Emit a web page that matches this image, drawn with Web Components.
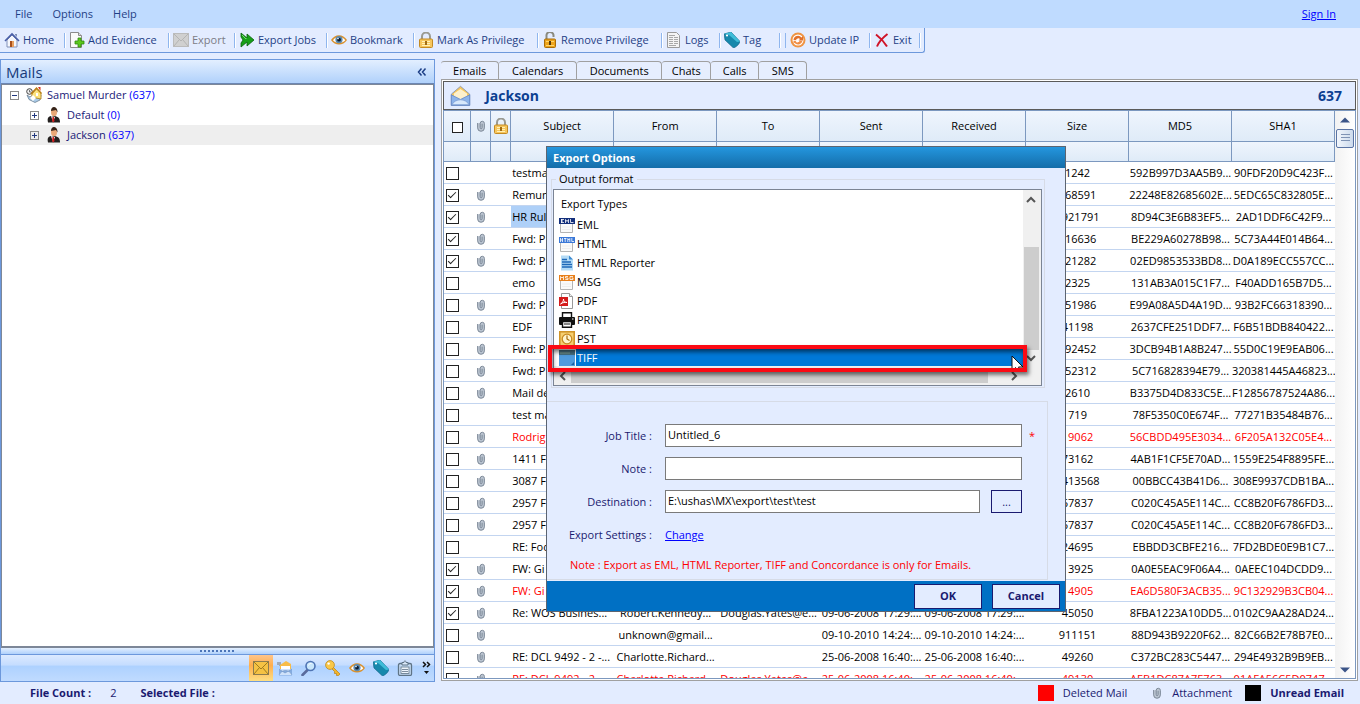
<!DOCTYPE html>
<html lang="en">
<head>
<meta charset="utf-8">
<title>Mail Examiner</title>
<style>
    html,body{height:100%;margin:0}
    body{font:12px/16px "Open Sans","Noto Sans",sans-serif;color:#1f3f86;background:#e3ecff;overflow:hidden}
</style>
</head>
<body>
<mail-app></mail-app>

<script>
const ICONS = {
    home: `<path d="M3 8v7h10V8L8 3z" fill="#f4f6fc" stroke="#8090b8"/><path d="M1 9l7-7 7 7" fill="none" stroke="#4a5fa8" stroke-width="1.600"/><path d="M11 2h2v3l-2-2z" fill="#8090b8"/><path d="M6 9h4v6H6z" fill="#a8501c"/><path d="M8 9h2v6H8z" fill="#e8a060"/>`,
    add: `<path d="M1.500.5h8l3 3v12h-11z" fill="#fafafa" stroke="#8c8c8c"/><path d="M9.500.5v3h3" fill="#ddd" stroke="#8c8c8c"/><path d="M9 6h3v3h3v3h-3v3H9v-3H6V9h3z" fill="#5cc81c" stroke="#2f8a10" stroke-width=".8"/>`,
    export: `<rect x=".5" y="1.500" width="15" height="13" fill="#d0d0d0" stroke="#bbb"/><path d="M1 2l7 7 7-7M1 14l5-6M15 14l-5-6" fill="none" stroke="#b4b4b4"/>`,
    jobs: `<path d="M2 1l6 5V2l7 6-7 6v-4l-6 5V11l2-3-2-3z" fill="#18a018" stroke="#0b5f10" stroke-width=".8"/><path d="M3 3l4 4v-1" fill="none" stroke="#6fe06f"/>`,
    eye: `<path d="M0 8c4-6.500 12-6.500 16 0-4 6-12 6-16 0z" fill="#d9902c"/><path d="M2 8.300C5 4 11 4 14.300 8.300 11 12 5 12 2 8.300z" fill="#fff"/><circle cx="8" cy="7.700" r="3.600" fill="#5b89ae"/><circle cx="8" cy="7.700" r="1.900" fill="#0c1c30"/><circle cx="7" cy="6.600" r=".8" fill="#fff"/>`,
    lock: `<path d="M4 8V4.500a4 4 0 0 1 8 0V8" fill="none" stroke="#9a9a92" stroke-width="2"/><rect x="1.500" y="7" width="13" height="8.500" rx="1" fill="#f6c65c" stroke="#c48a22"/><path d="M4 9.500h8M4 11.500h8M4 13.500h8" stroke="#fff0b8"/><path d="M7 9h2v4H7z" fill="#a06c14"/>`,
    unlock: `<path d="M4.500 8V4a3.500 3.500 0 0 1 7-1v2" fill="none" stroke="#8a8a80" stroke-width="2"/><rect x="2.500" y="7" width="11" height="8.500" rx="1" fill="#eda41c" stroke="#a86c0a"/><path d="M4 9.500h8M4 13.500h8" stroke="#ffd670"/><path d="M7 9h2v4H7z" fill="#583808"/>`,
    logs: `<path d="M1.500.5h9l3 3v12h-12z" fill="#f4f4f4" stroke="#9a9a9a"/><path d="M3 3.500h6M3 5.500h4M8 5.500h4M3 7.500h4M8 7.500h4M3 9.500h4M8 9.500h4M3 11.500h4M8 11.500h4M3 13.500h7" stroke="#a8a8a8"/>`,
    tag: `<path d="M0 2l7-2 9 9.500c-1 3-3 5-6.500 6.500L1 8z" fill="#1688ac" stroke="#0b5c80" stroke-width=".6"/><path d="M0 2l7-2 9 9.500-3 .5L5 3z" fill="#3fbcd8"/><circle cx="3" cy="3.500" r="1.100" fill="#fff"/>`,
    update: `<circle cx="8" cy="8" r="7.500" fill="#ef9443"/><circle cx="8" cy="8" r="5.500" fill="#fff"/><path d="M3.500 8a4.500 4.500 0 0 1 8-2.500L13 4v4.500H8.500L10 7a2.500 2.500 0 0 0-4 1z" fill="#e0702c"/><path d="M12.500 8.800a4.500 4.500 0 0 1-8 2L3.500 12V8.800h3l-.8 1a2.500 2.500 0 0 0 4-1z" fill="#f08c44"/>`,
    exit: `<path d="M2 2.500c4 3 8 7 11 12M13.500 2C9 5.500 5 9.500 3 14.500" fill="none" stroke="#d01428" stroke-width="2"/>`,
    clip: `<path d="M3.500 4.500v6a4.500 4.500 0 0 0 9 0v-6A3 3 0 0 0 7 3.500z" fill="#bcc6d2"/><path d="M3.500 4v6.500a4.500 4.500 0 0 0 9 0V4.500a2.800 2.800 0 0 0-5.600 0V10a1.200 1.500 0 0 0 2.600 0V5" fill="none" stroke="#7a8796" stroke-width="1.300"/>`,
    open: `<path d="M1 7l7-6 7 6v8.500H1z" fill="#f7c85a" stroke="#8896b4" stroke-width=".7"/><path d="M3 6.500L8 3l5 3.500V11H3z" fill="#fdf0cc"/><path d="M1 7.500L8 11l7-3.500v8H1z" fill="#8db4ea" stroke="#5f85c8" stroke-width=".6"/><path d="M1.500 15C4 10 12 10 14.500 15z" fill="#d8e8fb" stroke="#7a9cd4" stroke-width=".6"/>`,
    mail: `<rect x=".5" y="1.500" width="15" height="13" fill="#f5c244" stroke="#8c7c50"/><path d="M1 2l7 7 7-7M1 14l5.500-6.500M15 14L9.500 7.500" fill="none" stroke="#a07c20"/>`,
    mails: `<path d="M1 2v3M3 2v4" stroke="#777"/><path d="M3 5l6-4 5 3v5H3z" fill="#f8bc48"/><path d="M2 9h13v6.500H2z" fill="#84abdf"/><path d="M4 6h9v4H4z" fill="#fff"/><path d="M2 15c3-6 10-6 13 0M2 9l6 4 7-4" fill="#cfe2fa" stroke="#6f93c4" stroke-width=".6"/>`,
    search: `<path d="M6.500 10l-5 5" stroke="#5a6b9c" stroke-width="2.600" stroke-linecap="round"/><circle cx="9.500" cy="6" r="4.500" fill="#c8e6fb" stroke="#4f74b4" stroke-width="1.600"/><path d="M7.500 5.500c.5-1.500 1.500-2 3-2" stroke="#fff" fill="none"/>`,
    key: `<path d="M7 6l8 8-1.500 1.500h-2v-2h-2v-2L6 8z" fill="#f3b52c" stroke="#b97f15" stroke-width=".7"/><circle cx="5" cy="5" r="4.400" fill="#f9c848" stroke="#c08a1c" stroke-width=".8"/><circle cx="3.600" cy="3.600" r="1.200" fill="#fff"/>`,
    note: `<rect x="1.500" y="3.500" width="13" height="12" rx="1.500" fill="#c6dcf4" stroke="#5f7486" stroke-width="1.300"/><path d="M5 5V2.500h2C7 .3 9 .3 9 2.500h2V5z" fill="#dceafa" stroke="#5f7486"/><rect x="4" y="7" width="8" height="6.500" fill="#eef5fc" stroke="#5f7486" stroke-width=".8"/><path d="M5 9.500h6M5 11.500h6" stroke="#5f7486" stroke-width=".8"/>`,
    case: `<circle cx="3.500" cy="4.500" r="2.800" fill="#eee" stroke="#444"/><path d="M3.500 3v2h1.500" fill="none" stroke="#444" stroke-width=".7"/><path d="M1 8l3 2 4-3 7 1-1 5-5 2.500-6-3z" fill="#aacbe8" stroke="#5f7286" stroke-width=".7"/><path d="M6 7l4.500-5L15 6v6l-5-1-4-1z" fill="#fce27c" stroke="#a87a18" stroke-width=".8"/><path d="M5 7l5.500-6 5 5.500" fill="none" stroke="#b87c14" stroke-width="1.300"/><path d="M12 0h2.500v4z" fill="#d8341c"/><path d="M10 6h2v3h-2z" fill="#fff"/><path d="M4 11l3-3 3 3-3 3z" fill="#fff"/>`,
    person: `<path d="M2 15.500c-1-4 0-6 3-6.500h4c4 1 5 3 5 6.500z" fill="#23201f"/><path d="M5 9l2 6 2-5z" fill="#fff"/><path d="M6.500 10h1.400l.6 4-1.200 1.500L6 14z" fill="#cc1c1c"/><ellipse cx="8" cy="5" rx="3" ry="4.300" fill="#e9a877"/><path d="M5 4c0-6 7-5 6.500 1.500L10 3z" fill="#37241a"/>`,
    eml: `<path d="M1.500 3v12.500h12V3" fill="#fafafa" stroke="#b4b4b4"/><path d="M3 10h9M3 12.500h9" stroke="#eee"/><rect y="1" width="16" height="6" fill="#14307c"/><path d="M2 2.500h3M2 4h2M2 5.500h3M2.500 2v4M6.500 6V2.500l1.500 2 1.500-2V6M11.500 2v3.500h3" fill="none" stroke="#fff" stroke-width=".8"/>`,
    html: `<path d="M1.500 3v12.500h12V3" fill="#fafafa" stroke="#b4b4b4"/><path d="M3 10h9M3 12.500h9" stroke="#eee"/><rect y="1" width="16" height="6" fill="#3a78d8"/><path d="M1.500 2v4M3.500 2v4M1.500 4h2M5 2.500h2.500M6.200 2v4M8.800 6V2.500l1 1.500 1-1.500V6M12.800 2v3.500H15" fill="none" stroke="#fff" stroke-width=".8"/>`,
    report: `<path d="M2 .5h8l4 4v11H2z" fill="#b4dbf6"/><path d="M10 .5v4h4z" fill="#3b8ad0"/><path d="M3 4.500h5M3 7h9M3 9.500h10M3 12h10" stroke="#1c68b8" stroke-width="1.300"/>`,
    msg: `<path d="M1.500 3v12.500h12V3" fill="#fafafa" stroke="#b4b4b4"/><path d="M3 10h9M3 12.500h9" stroke="#eee"/><rect y="1" width="16" height="6" fill="#e8801c"/><path d="M1.500 6V2.500L3 4l1.500-1.500V6M9 2.500H6.500V4H9v1.500H6.300M14 2.500h-3v3h3V4h-1.300" fill="none" stroke="#fff" stroke-width=".8"/>`,
    pdf: `<path d="M2.500.5h8l3 3v12h-11z" fill="#fff" stroke="#999"/><path d="M10.500.5v3h3" fill="#eee" stroke="#999"/><rect y="4" width="9" height="9" fill="#d41c1c"/><path d="M1.500 11c2-1 3-3 3-5 0 2 1 3.500 3.500 3.500C6 9 4 9.500 1.500 11z" fill="none" stroke="#fff"/>`,
    print: `<path d="M3.500 5V.8h9V5" fill="#fff" stroke="#111" stroke-width="1.400"/><rect y="5" width="16" height="8" rx="1" fill="#111"/><path d="M3.500 9.500h9v5.700h-9z" fill="#fff" stroke="#111" stroke-width="1.400"/><path d="M5 12h6" stroke="#111"/><rect x="13" y="6.500" width="1.500" height="1" fill="#fff"/>`,
    pst: `<rect x=".8" y=".8" width="14.400" height="14.400" fill="#f6cf70" stroke="#d09428" stroke-width="1.600"/><circle cx="8" cy="8" r="4.800" fill="#fff4cc" stroke="#c88a20" stroke-width="1.300"/><path d="M8 4.500V8l2.500 1.500" fill="none" stroke="#a86c10" stroke-width="1.200"/>`,
    tiff: `<rect width="16" height="16" fill="#4f9bdd"/><rect width="16" height="5" fill="#466f80"/><path d="M2 2v2M4 2v2M6 2v2M8 2v2M10 2v2" stroke="#7f9c8c"/><path d="M15 12v3h-3z" fill="#1a5ea0"/>`,
    arrow: `<path d="M1 0v15l3.500-3.500L7 16l2.500-1.500L7.500 11H12z" fill="#fff" stroke="#111"/>`,
    up: `<path d="M4 10l4-4 4 4" fill="none" stroke="#555" stroke-width="2"/>`,
    down: `<path d="M4 6l4 4 4-4" fill="none" stroke="#555" stroke-width="2"/>`,
    left: `<path d="M10 4L6 8l4 4" fill="none" stroke="#555" stroke-width="2"/>`,
    right: `<path d="M6 4l4 4-4 4" fill="none" stroke="#555" stroke-width="2"/>`,
    triup: `<path d="M3 10.500h10L8 5.500z" fill="#3c5588"/>`,
    tridown: `<path d="M3 5.500h10l-5 5z" fill="#3c5588"/>`,
    collapse: `<path d="M7.500 4.500L4.500 8l3 3.500M11.500 4.500L8.500 8l3 3.500" fill="none" stroke="#1d3f86" stroke-width="1.500"/>`,
    more: `<path d="M5 2l2.500 2.500L5 7M9 2l2.500 2.500L9 7" fill="none" stroke="#111" stroke-width="1.500"/><path d="M6 11h5l-2.500 3z" fill="#111"/>`
};

class UiIcon extends HTMLElement {
    connectedCallback() {
        const size = this.getAttribute('size') || 16;
        this.attachShadow({ mode: 'open' });
        this.shadowRoot.innerHTML = `
            <style>:host{display:block;flex:none;width:${size}px;height:${size}px}svg{display:block;width:100%;height:100%}</style>
            <svg viewBox="0 0 16 16" aria-hidden="true">${ICONS[this.getAttribute('name')]}</svg>
        `;
    }
}
customElements.define('ui-icon', UiIcon);

class MenuBar extends HTMLElement {
    connectedCallback() {
        this.attachShadow({ mode: 'open' });
        this.shadowRoot.innerHTML = `
            <style>
                :host{display:flex;align-items:center;height:28px;padding:0 24px 0 5px;background:#bfdbff;box-sizing:border-box}
                nav{display:flex;flex:1}
                button{font:inherit;font-size:11px;color:#1f3f86;background:none;border:0;padding:0 10px}
                a{font-size:11px;color:#00f}
            </style>
            <nav><button>File</button><button>Options</button><button>Help</button></nav>
            <a href="#">Sign In</a>
        `;
    }
}
customElements.define('menu-bar', MenuBar);

class ToolItem extends HTMLElement {
    connectedCallback() {
        this.attachShadow({ mode: 'open' });
        this.shadowRoot.innerHTML = `
            <style>
                :host{display:flex;flex:none;height:15px;align-items:center;border-right:1px solid #8fb6ee;box-shadow:1px 0 #fff;box-sizing:border-box}
                button{display:flex;align-items:center;gap:3px;font:inherit;color:#1f3f86;background:none;border:0;padding:0 0 0 4px;white-space:nowrap}
                button:disabled{color:#7d7d86}
            </style>
            <button ${this.hasAttribute('disabled') ? 'disabled' : ''}><ui-icon name="${this.getAttribute('icon')}"></ui-icon><slot></slot></button>
        `;
    }
}
customElements.define('tool-item', ToolItem);

class ToolBar extends HTMLElement {
    connectedCallback() {
        this.attachShadow({ mode: 'open' });
        this.shadowRoot.innerHTML = `
            <style>
                :host{display:flex;flex:none;height:25px}
                .bar{display:flex;align-items:center;font-size:11px;padding-right:4px;border-bottom:1px solid #6c98dc;border-right:1px solid #6c98dc;border-radius:0 0 3px 0;box-sizing:border-box}
                .end{width:6px}
                .end::after{content:"";display:block;height:15px;width:5px;border-right:1px solid #8fb6ee}
            </style>
            <div class="bar">
                <tool-item icon="home" style="width:65px">Home</tool-item>
                <tool-item icon="add" style="width:104px">Add Evidence</tool-item>
                <tool-item icon="export" style="width:66px" disabled>Export</tool-item>
                <tool-item icon="jobs" style="width:92px">Export Jobs</tool-item>
                <tool-item icon="eye" style="width:87px">Bookmark</tool-item>
                <tool-item icon="lock" style="width:124px">Mark As Privilege</tool-item>
                <tool-item icon="unlock" style="width:124px">Remove Privilege</tool-item>
                <tool-item icon="logs" style="width:58px">Logs</tool-item>
                <tool-item icon="tag" style="width:60px">Tag</tool-item>
                <div class="end"></div>
                <tool-item icon="update" style="width:84px">Update IP</tool-item>
                <tool-item icon="exit" style="width:50px">Exit</tool-item>
            </div>
        `;
    }
}
customElements.define('tool-bar', ToolBar);

class MailsPanel extends HTMLElement {
    connectedCallback() {
        this.attachShadow({ mode: 'open' });
        this.shadowRoot.innerHTML = `
            <style>
                :host{display:flex;flex-direction:column;border:1px solid #6c98dc;box-sizing:border-box;min-height:0}
                header{display:flex;align-items:center;height:23px;padding:0 4px 0 5px;background:linear-gradient(#e3efff,#b0d1fb);border-bottom:1px solid #6c87b4}
                h2{flex:1;margin:0;font-size:15px;font-weight:400;color:#173a7a}
                button{background:none;border:0;padding:0;display:flex;align-items:center;justify-content:center}
                ul{list-style:none;margin:0;padding:0}
                .tree{flex:1;background:#fff;border:1px solid #7d8798;border-width:1px 1px 2px;font-size:11px;min-height:0}
                li>div{display:flex;align-items:center;height:20px;color:#1a1a78}
                li>div.on{background:#eee}
                .root{padding-left:8px}
                .sub{padding-left:28px}
                .box{width:9px;height:9px;box-sizing:border-box;border:1px solid #8a8a8a;margin-right:7px;background:linear-gradient(#22397f,#22397f) center/5px 1px no-repeat}
                .plus{background:linear-gradient(#22397f,#22397f) center/5px 1px no-repeat,linear-gradient(#22397f,#22397f) center/1px 5px no-repeat}
                span{margin-left:5px;white-space:pre}
                b{font-weight:400;color:#00f}
                .grip{height:6px;background:linear-gradient(#e3efff,#b0d1fb);border-bottom:1px solid #6c98dc;display:flex;align-items:center;justify-content:center}
                .grip i{width:35px;height:2px;background:repeating-linear-gradient(90deg,#4b74b8 0 2px,transparent 2px 4px)}
                .bar{display:flex;justify-content:flex-end;height:26px;background:linear-gradient(#dceaff,#c4dcff 40%,#add1ff 41%,#c0dbff)}
                .bar button{width:24px}
                .bar .on{background:linear-gradient(#ffc58a,#ffae4c 40%,#fddf84)}
                .bar .more{width:17px}
            </style>
            <header><h2>Mails</h2><button aria-label="Collapse"><ui-icon name="collapse"></ui-icon></button></header>
            <ul class="tree">
                <li><div class="root"><i class="box"></i><ui-icon name="case"></ui-icon><span>Samuel Murder <b>(637)</b></span></div>
                    <ul>
                        <li><div class="sub"><i class="box plus"></i><ui-icon name="person"></ui-icon><span>Default <b>(0)</b></span></div></li>
                        <li><div class="sub on"><i class="box plus"></i><ui-icon name="person"></ui-icon><span>Jackson <b>(637)</b></span></div></li>
                    </ul>
                </li>
            </ul>
            <div class="grip"><i></i></div>
            <div class="bar">
                <button class="on" aria-label="Mails"><ui-icon name="mail"></ui-icon></button>
                <button aria-label="Attachments"><ui-icon name="mails"></ui-icon></button>
                <button aria-label="Search"><ui-icon name="search"></ui-icon></button>
                <button aria-label="Privilege"><ui-icon name="key"></ui-icon></button>
                <button aria-label="Bookmarks"><ui-icon name="eye"></ui-icon></button>
                <button aria-label="Tags"><ui-icon name="tag"></ui-icon></button>
                <button aria-label="Notes"><ui-icon name="note"></ui-icon></button>
                <button class="more" aria-label="More"><ui-icon name="more"></ui-icon></button>
            </div>
        `;
    }
}
customElements.define('mails-panel', MailsPanel);

class TabStrip extends HTMLElement {
    connectedCallback() {
        const tabs = [['Emails', 58], ['Calendars', 78], ['Documents', 85], ['Chats', 49], ['Calls', 48], ['SMS', 48]];
        this.attachShadow({ mode: 'open' });
        this.shadowRoot.innerHTML = `
            <style>
                :host{display:flex;flex:none;height:18px}
                button{font:inherit;font-size:11px;line-height:16px;color:#000;padding:0;background:#e6eefe;border:1px solid #a0a0a0;border-width:1px 1px 0 0;border-radius:3px 4px 0 0;box-sizing:border-box}
                button:first-child{background:#fff;border-left-width:1px}
            </style>
            ${tabs.map(([t, w], i) => `<button role="tab" aria-selected="${i === 0}" style="width:${w}px">${t}</button>`).join('')}
        `;
    }
}
customElements.define('tab-strip', TabStrip);

// checked, attachment, subject, from, to, sent, received, size, md5, sha1, deleted
const P = '\u2007';
const MAILS = [
    [0, 0, 'testma', '', '', '', '', '1242', '592B997D3AA5B9...', '90FDF20D9C423F...'],
    [1, 1, 'Remun', '', '', '', '', P + '68591', '22248E82685602E...', '5EDC65C832805E...'],
    [1, 1, 'HR Rul', '', '', '', '', P + '921791', '8D94C3E6B83EF5...', '2AD1DDF6C42F9...'],
    [1, 1, 'Fwd: P', '', '', '', '', P + '16636', 'BE229A60278B98...', '5C73A44E014B64...'],
    [1, 1, 'Fwd: P', '', '', '', '', P + '21282', '02ED9853533BD8...', 'D0A189ECC557CC...'],
    [0, 0, 'emo', '', '', '', '', '2325', '131AB3A015C1F7...', 'F40ADD165B7D5...'],
    [0, 1, 'Fwd: P', '', '', '', '', P + '51986', 'E99A08A5D4A19D...', '93B2FC66318390...'],
    [0, 1, 'EDF', '', '', '', '', '41198', '2637CFE251DDF7...', 'F6B51BDB840422...'],
    [0, 1, 'Fwd: P', '', '', '', '', P + '92452', '3DCB94B1A8B247...', '55D0C19E9EAB06...'],
    [0, 1, 'Fwd: P', '', '', '', '', P + '52312', '5C716828394E79...', '320381445A46823...'],
    [0, 1, 'Mail de', '', '', '', '', '2610', 'B3375D4D833C5E...', 'F12856787524A86...'],
    [0, 0, 'test ma', '', '', '', '', '719', '78F5350C0E674F...', '77271B35484B76...'],
    [0, 1, 'Rodrig', '', '', '', '', P + '9062', '56CBDD495E3034...', '6F205A132C05E4...', 1],
    [0, 1, '1411 F', '', '', '', '', '73162', '4AB1F1CF5E70AD...', '1559E254F8895FE...'],
    [0, 1, '3087 F', '', '', '', '', P + '413568', '00BBCC43B41D6...', '308E9937CDB1BA...'],
    [0, 1, '2957 F', '', '', '', '', '67837', 'C020C45A5E114C...', 'CC8B20F6786FD3...'],
    [0, 1, '2957 F', '', '', '', '', '67837', 'C020C45A5E114C...', 'CC8B20F6786FD3...'],
    [0, 0, 'RE: Foo', '', '', '', '', '24695', 'EBBDD3CBFE216...', '7FD2BDE0E9B1C7...'],
    [1, 1, 'FW: Gi', '', '', '', '', P + '3925', '0A0E5EAC9F06A4...', '0AEEC104DCDD9...'],
    [1, 1, 'FW: Gi', '', '', '', '', P + '4905', 'EA6D580F3ACB35...', '9C132929B3CB04...', 1],
    [1, 1, 'Re: WOS Busines...', 'Robert.Kennedy...', 'Douglas.Yates@e...', '09-06-2008 17:29:...', '09-06-2008 17:29:...', '45050', '8FBA1223A10DD5...', '0102C9AA28AD24...'],
    [0, 1, '', 'unknown@gmail...', '', '09-10-2010 14:24:...', '09-10-2010 14:24:...', '911151', '88D943B9220F62...', '82C66B2E78B7E0...'],
    [0, 1, 'RE: DCL 9492 - 2 -...', 'Charlotte.Richard...', '', '25-06-2008 16:40:...', '25-06-2008 16:40:...', '49260', 'C372BC283C5447...', '294E4932B9B9EB...'],
    [0, 1, 'RE: DCL 9492 - 2 -...', 'Charlotte.Richard...', 'Douglas.Yates@e...', '25-06-2008 16:40:...', '25-06-2008 16:40:...', '49130', 'AEB1DC87A7E763...', '01AFA56C5D0747...', 1]
];

class MailGrid extends HTMLElement {
    connectedCallback() {
        const heads = ['Subject', 'From', 'To', 'Sent', 'Received', 'Size', 'MD5', 'SHA1'];
        this.attachShadow({ mode: 'open' });
        this.shadowRoot.innerHTML = `
            <style>
                :host{display:flex;flex-direction:column;flex:1;min-height:0;border:1px solid #a0a0a0;background:#fff;padding:1px;color:#000;box-sizing:border-box}
                header{display:flex;align-items:center;height:27px;flex:none;padding:0 13px 0 6px;background:#e3ecff;border:1px solid #5a5a5a}
                h1{flex:1;margin:0 0 0 14px;font-size:14px;font-weight:700;color:#0c3f91}
                header b{font-size:14px;color:#0c3f91}
                .body{display:flex;flex:1;min-height:0;overflow:hidden;border:1px solid #7c98bf}
                .scroll{flex:1;overflow:hidden}
                table{width:100%;border-collapse:separate;border-spacing:0;table-layout:fixed;font-size:11px}
                th{height:30px;padding:0;font-weight:400;background:linear-gradient(#eff5fd,#dfebf8);border-right:1px solid #7c98bf;border-bottom:1px solid #7c98bf}
                .filter th{height:19px}
                th input{width:11px;height:11px}
                th ui-icon,td ui-icon{margin:auto}
                td{height:21px;padding:0;text-align:center;white-space:nowrap;border-bottom:1px solid #c3d5f0;line-height:16px}
                td:first-child{text-align:left;padding-left:2px}
                .subject{text-align:left;padding-left:1px}
                .on{background:#aed0f8}
                .deleted{color:#f00}
                input{appearance:none;display:inline-block;width:13px;height:13px;margin:0;border:1px solid #222;background:#fff;box-sizing:border-box;vertical-align:middle}
                input:checked::before{content:"";display:block;width:7px;height:3px;margin:2px 0 0 1px;border:solid #222;border-width:0 0 1px 1px;transform:rotate(-45deg)}
                .bar{width:20px;display:flex;flex-direction:column;align-items:center;padding-top:1px;background:linear-gradient(90deg,#f2f2f2,#fff);box-sizing:border-box}
                .thumb{width:16px;height:17px;margin-top:1px;border:1px solid #5a74a4;border-radius:2px;background:repeating-linear-gradient(#7f93b4 0 1px,transparent 1px 3px) 4px 4px/9px 9px no-repeat,linear-gradient(90deg,#f2f6fc,#ccdaec)}
                .fill{flex:1}
            </style>
            <header><ui-icon name="open" size="21"></ui-icon><h1>Jackson</h1><b>637</b></header>
            <div class="body">
                <div class="scroll">
                    <table>
                        <colgroup><col style="width:27px"><col style="width:20px"><col style="width:20px">${heads.map(() => '<col>').join('')}</colgroup>
                        <thead>
                            <tr><th><input type="checkbox" aria-label="Select all"></th><th><ui-icon name="clip" size="12"></ui-icon></th><th><ui-icon name="lock"></ui-icon></th>${heads.map(h => `<th>${h}</th>`).join('')}</tr>
                            <tr class="filter">${'<th></th>'.repeat(11)}</tr>
                        </thead>
                        <tbody>
                            ${MAILS.map(([on, clip, subject, ...rest], i) => `
                                <tr class="${rest[7] ? 'deleted' : ''}">
                                    <td><input type="checkbox" aria-label="Select mail ${i + 1}" ${on ? 'checked' : ''}></td>
                                    <td>${clip ? '<ui-icon name="clip" size="12"></ui-icon>' : ''}</td><td></td>
                                    <td class="subject ${i === 2 ? 'on' : ''}">${subject}</td>
                                    ${rest.slice(0, 7).map(v => `<td>${v}</td>`).join('')}
                                </tr>`).join('')}
                        </tbody>
                    </table>
                </div>
                <div class="bar"><ui-icon name="triup"></ui-icon><div class="thumb"></div><div class="fill"></div><ui-icon name="tridown"></ui-icon></div>
            </div>
        `;
    }
}
customElements.define('mail-grid', MailGrid);

class ExportDialog extends HTMLElement {
    connectedCallback() {
        const types = [['eml', 'EML'], ['html', 'HTML'], ['report', 'HTML Reporter'], ['msg', 'MSG'], ['pdf', 'PDF'], ['print', 'PRINT'], ['pst', 'PST'], ['tiff', 'TIFF']];
        this.attachShadow({ mode: 'open' });
        this.shadowRoot.innerHTML = `
            <style>
                :host{display:flex;flex-direction:column;border:1px solid #5c6470;background:#e3ecff;font-size:11px;box-sizing:border-box;color:#1a1a70}
                h2{margin:0;height:21px;line-height:21px;padding-left:6px;font-size:11px;color:#fff;background:linear-gradient(#2496de,#146da9);flex:none}
                fieldset{margin:3px 20px 0 4px;padding:2px 2px 1px 1px;border:1px solid #d6dbe6;min-width:0;position:relative}
                legend{margin-left:3px;padding:0 3px;line-height:16px;color:#000}
                .list{display:grid;grid-template-columns:1fr 18px;grid-template-rows:176px 19px;height:195px;border:1px solid #7b8494;background:#fff;color:#000;overflow:hidden}
                ul{list-style:none;margin:0;padding:4px 0 0 5px;overflow:hidden}
                li{display:flex;align-items:center;height:19px;gap:1px}
                li:first-child{height:20px;padding:0 2px;margin-bottom:1px}
                li span{padding-left:1px;flex:1;line-height:19px}
                .on span{background:#0078d7;color:#fff}
                .v{display:flex;flex-direction:column;align-items:center;background:#f0f0f0;padding:2px 2px 0 0}
                .v i{flex:1;width:15px;margin:39px 0 0;background:#cdcdcd}
                .h{grid-column:1/3;display:flex;align-items:center;padding-left:1px;background:#f0f0f0}
                .h i{flex:1;height:15px;margin-right:18px;background:#cdcdcd}
                .h ui-icon:last-child{margin-right:19px}
                .mark{position:absolute;left:-4px;right:17px;bottom:15px;height:27px;border:4px solid #fb0a14;box-sizing:border-box;box-shadow:2px 3px 4px #0008,inset 1px 3px 4px #0008}
                .cursor{position:absolute;right:17px;bottom:15px}
                form{display:flex;flex-direction:column;margin:13px 17px 0 0;padding:22px 25px 5px 0;border:1px solid #d6dbe6;border-left:0}
                .row{display:flex;align-items:center;height:23px;margin-bottom:10px}
                label,.label{width:105px;text-align:right;margin-right:13px}
                input{flex:1;font:inherit;color:#000;height:23px;padding:0 2px 2px;border:1px solid #7a7a7a;background:#fff;box-sizing:border-box;min-width:0}
                .star{width:0;overflow:visible;color:#f00}
                .star i{font-style:normal;margin-left:7px}
                button{font:inherit;color:#1a1a70;background:#e3ecff;border:1px solid #1a1a70;padding:0;box-sizing:border-box}
                .browse{width:31px;height:23px;margin-left:11px}
                a{color:#00f}
                p{margin:0 0 0 23px;color:#f00;line-height:18px}
                footer{display:flex;justify-content:flex-end;align-items:center;gap:10px;height:30px;padding-right:5px;background:#0070c4;margin-top:auto}
                footer button{width:68px;height:25px;font-weight:700}
            </style>
            <h2>Export Options</h2>
            <fieldset>
                <legend>Output format</legend>
                <div class="list">
                    <ul role="listbox" aria-label="Export Types"><li>Export Types</li>
                        ${types.map(([icon, t]) => `<li role="option" class="${t === 'TIFF' ? 'on' : ''}"><ui-icon name="${icon}"></ui-icon><span>${t}</span></li>`).join('')}
                    </ul>
                    <div class="v"><ui-icon name="up"></ui-icon><i></i><ui-icon name="down"></ui-icon></div>
                    <div class="h"><ui-icon name="left"></ui-icon><i></i><ui-icon name="right"></ui-icon></div>
                </div>
                <ui-icon class="cursor" name="arrow"></ui-icon>
                <div class="mark"></div>
            </fieldset>
            <form>
                <div class="row"><label for="title">Job Title :</label><input id="title" value="Untitled_6"><span class="star"><i>*</i></span></div>
                <div class="row"><label for="note">Note :</label><input id="note"></div>
                <div class="row"><label for="dest">Destination :</label><input id="dest" value="E:\\ushas\\MX\\export\\test\\test"><button type="button" class="browse">...</button></div>
                <div class="row"><span class="label">Export Settings :</span><a href="#">Change</a></div>
                <p>Note : Export as EML, HTML Reporter, TIFF and Concordance is only for Emails.</p>
            </form>
            <footer><button>OK</button><button>Cancel</button></footer>
        `;
    }
}
customElements.define('export-dialog', ExportDialog);

class StatusBar extends HTMLElement {
    connectedCallback() {
        this.attachShadow({ mode: 'open' });
        this.shadowRoot.innerHTML = `
            <style>
                :host{display:flex;align-items:center;height:22px;padding:0 16px 0 30px;font-size:11px;color:#1a1a70;box-sizing:border-box}
                .count{margin:0 24px 0 19px}
                .fill{flex:1}
                .key{display:flex;align-items:center;gap:9px;margin-left:13px}
                .key:nth-of-type(2){margin-left:24px}
                i{width:16px;height:16px}
            </style>
            <b>File Count :</b><span class="count">2</span><b>Selected File :</b>
            <span class="fill"></span>
            <div class="key"><i style="background:#f00"></i>Deleted Mail</div>
            <div class="key"><ui-icon name="clip" size="12"></ui-icon>Attachment</div>
            <div class="key"><i style="background:#000"></i><b>Unread Email</b></div>
        `;
    }
}
customElements.define('status-bar', StatusBar);

class MailApp extends HTMLElement {
    connectedCallback() {
        this.attachShadow({ mode: 'open' });
        this.shadowRoot.innerHTML = `
            <style>
                :host{display:flex;flex-direction:column;height:100vh;position:relative}
                main{display:flex;flex:1;min-height:0;margin-top:6px}
                mails-panel{width:32%;flex:none}
                .right{display:flex;flex-direction:column;flex:1;min-width:0;margin:2px 2px 1px 6px}
                export-dialog{position:absolute;left:546px;top:146px;width:520px;height:466px}
            </style>
            <menu-bar></menu-bar>
            <tool-bar></tool-bar>
            <main>
                <mails-panel></mails-panel>
                <div class="right"><tab-strip></tab-strip><mail-grid></mail-grid></div>
            </main>
            <status-bar></status-bar>
            <export-dialog role="dialog" aria-label="Export Options"></export-dialog>
        `;
    }
}
customElements.define('mail-app', MailApp);
</script>
</body>
</html>
